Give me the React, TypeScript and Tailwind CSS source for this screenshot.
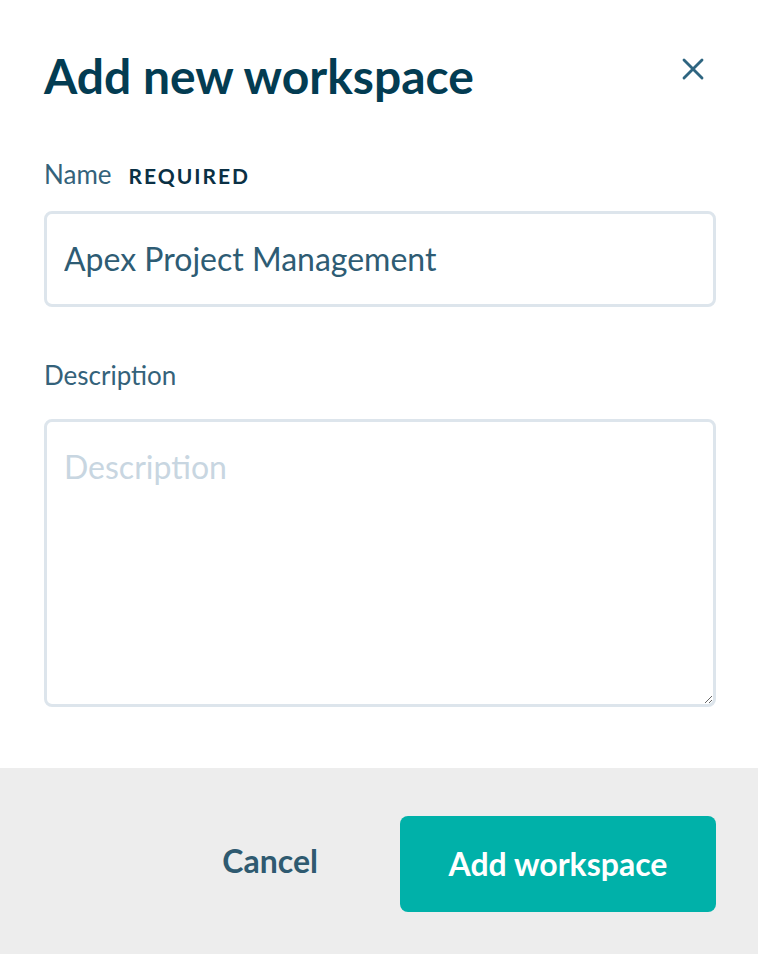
import { X } from 'lucide-react';

export default function App() {
  return (
    <div className="flex min-h-[954px] w-full flex-col bg-white font-['Lato','Noto_Sans',sans-serif]">
      <div className="flex flex-1 flex-col pl-[44px] pr-[42px] pt-[46px]">
        {/* Header */}
        <div className="flex items-start justify-between">
          <h1 className="text-[48px] font-bold leading-[60px] text-[#033c52]">Add new workspace</h1>
          <button className="mr-[5px] mt-[5px] text-[#2e6580]">
            <X className="h-[36px] w-[36px]" strokeWidth={1.9} />
          </button>
        </div>

        {/* Name */}
        <div className="mt-[52px] flex items-baseline gap-[17px]">
          <label className="text-[26px] leading-[32px] text-[#34627a]">Name</label>
          <span className="text-[21px] font-bold tracking-[2px] text-[#0a3044]">REQUIRED</span>
        </div>
        <input
          className="mt-[19px] h-[96px] w-full rounded-[8px] border-[3px] border-[#dde5ec] px-[17px] text-[32px] text-[#2e5c74] outline-none"
          defaultValue="Apex Project Management"
        />

        {/* Description */}
        <label className="mt-[52px] text-[26px] leading-[32px] text-[#34627a]">Description</label>
        <textarea
          className="mt-[28px] h-[288px] w-full resize-y rounded-[8px] border-[3px] border-[#dde5ec] px-[17px] py-[21px] text-[32px] text-[#2e5c74] outline-none placeholder:text-[#c8d6e1]"
          placeholder="Description"
        />
      </div>

      {/* Footer */}
      <div className="mt-[61px] flex h-[186px] items-center justify-end gap-[82px] bg-[#ededed] px-[42px]">
        <button className="text-[32px] font-bold text-[#2f5a70]">Cancel</button>
        <button className="mt-[6px] h-[96px] w-[316px] rounded-[8px] bg-[#00b1a9] text-[32px] font-bold text-white">
          Add workspace
        </button>
      </div>
    </div>
  );
}
